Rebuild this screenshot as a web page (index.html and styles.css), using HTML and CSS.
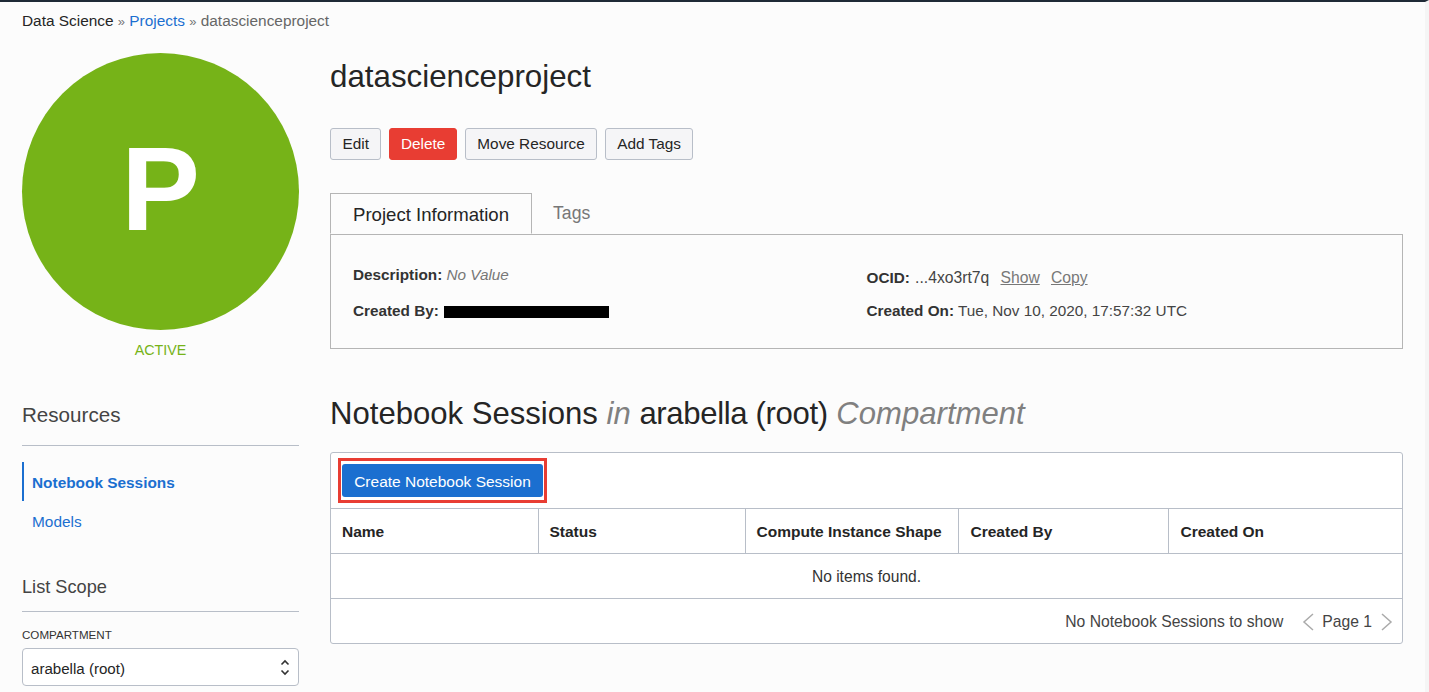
FILE: index.html
```html
<!DOCTYPE html>
<html lang="en">
<head>
    <meta charset="UTF-8">
    <meta name="viewport" content="width=device-width, initial-scale=1.0">
    <title>datascienceproject</title>
    <link rel="stylesheet" href="styles.css">
</head>
<body>
    <div class="page">
        <div class="breadcrumb">
            <span>Data Science</span> <span class="sep">»</span> <a href="#">Projects</a> <span class="sep">»</span> <span class="current">datascienceproject</span>
        </div>
        <div class="columns">
            <aside class="sidebar">
                <div class="avatar">P</div>
                <div class="status">ACTIVE</div>
                <h4 class="side-title resources-title">Resources</h4>
                <ul class="side-nav">
                    <li class="active"><a href="#">Notebook Sessions</a></li>
                    <li><a href="#">Models</a></li>
                </ul>
                <h4 class="side-title scope-title">List Scope</h4>
                <div class="field-label">COMPARTMENT</div>
                <div class="select">
                    <span>arabella (root)</span>
                    <svg width="10" height="17" viewBox="0 0 10 17" fill="none" stroke="#333" stroke-width="1.6">
                        <path d="M1.5 5.5 5 2l3.5 3.5"/>
                        <path d="M1.5 11.5 5 15l3.5-3.5"/>
                    </svg>
                </div>
            </aside>
            <main class="content">
                <h1>datascienceproject</h1>
                <div class="actions">
                    <button class="btn">Edit</button>
                    <button class="btn btn-danger">Delete</button>
                    <button class="btn">Move Resource</button>
                    <button class="btn">Add Tags</button>
                </div>
                <div class="tabs">
                    <div class="tab active">Project Information</div>
                    <div class="tab">Tags</div>
                </div>
                <div class="info">
                    <div class="info-col">
                        <div class="info-row desc"><b>Description:</b> <i>No Value</i></div>
                        <div class="info-row"><b>Created By:</b> <span class="redacted"></span></div>
                    </div>
                    <div class="info-col">
                        <div class="info-row ocid"><b>OCID:</b> <span class="ocid-val">...4xo3rt7q</span> <a href="#">Show</a> <a href="#">Copy</a></div>
                        <div class="info-row"><b>Created On:</b> Tue, Nov 10, 2020, 17:57:32 UTC</div>
                    </div>
                </div>
                <h2>Notebook Sessions <i>in</i> <span class="scope-name">arabella (root)</span> <i>Compartment</i></h2>
                <div class="panel">
                    <div class="toolbar">
                        <div class="highlight"><button class="btn-primary">Create Notebook Session</button></div>
                    </div>
                    <table>
                        <thead>
                            <tr>
                                <th class="col-name">Name</th>
                                <th class="col-status">Status</th>
                                <th class="col-shape">Compute Instance Shape</th>
                                <th class="col-by">Created By</th>
                                <th class="col-on">Created On</th>
                            </tr>
                        </thead>
                        <tbody>
                            <tr><td colspan="5">No items found.</td></tr>
                        </tbody>
                    </table>
                    <div class="pager">
                        <span class="pager-text">No Notebook Sessions to show</span>
                        <svg width="12" height="18" viewBox="0 0 12 18" fill="none" stroke="#aaa" stroke-width="1.5"><path d="M11 1 2 9l9 8"/></svg>
                        <span class="page-num">Page 1</span>
                        <svg width="12" height="18" viewBox="0 0 12 18" fill="none" stroke="#aaa" stroke-width="1.5"><path d="m1 1 9 8-9 8"/></svg>
                    </div>
                </div>
            </main>
        </div>
    </div>
</body>
</html>
```

FILE: styles.css
```css
html, body {
    height: 100%;
}

body {
    margin: 0;
    height: 692px;
    overflow: hidden;
    background: #fcfcfc;
    color: #252525;
    font-family: "Liberation Sans", Arial, sans-serif;
    font-size: 15.3px;
}

a {
    color: #1b6fd0;
    text-decoration: none;
}

.page {
    height: 692px;
    border-top: 2px solid #1f2a36;
    border-right: 4px solid #f5f5f5;
    padding: 0 22px;
    box-sizing: border-box;
    overflow: hidden;
}

.breadcrumb {
    padding-top: 10px;
    height: 41px;
    box-sizing: border-box;
    line-height: 18px;
    font-size: 15.4px;
}

.breadcrumb .sep {
    color: #777;
    font-size: 13px;
}

.breadcrumb .current {
    color: #666;
}

.columns {
    display: flex;
    gap: 31px;
}

.sidebar {
    width: 277px;
    flex: none;
    padding-top: 10px;
}

.avatar {
    width: 277px;
    height: 277px;
    border-radius: 50%;
    background: #76b318;
    color: #fff;
    font-size: 118px;
    font-weight: 700;
    text-align: center;
    line-height: 273px;
}

.status {
    margin-top: 11px;
    text-align: center;
    color: #76b318;
    font-size: 14.3px;
    line-height: 18px;
}

.side-title {
    margin: 0;
    font-weight: 400;
    font-size: 20.6px;
    line-height: 24px;
    color: #444;
    padding-bottom: 18px;
    border-bottom: 1px solid #b8bec8;
}

.resources-title {
    margin-top: 44px;
}

.scope-title {
    font-size: 18.2px;
    margin-top: 35px;
    padding-bottom: 12px;
}

.side-nav {
    list-style: none;
    margin: 16px 0 0;
    padding: 0;
}

.side-nav li {
    height: 39px;
    line-height: 41px;
    padding-left: 10px;
    font-size: 15.4px;
}

.side-nav li.active {
    border-left: 2px solid #1b6fd0;
    padding-left: 8px;
    font-weight: 700;
}

.field-label {
    margin-top: 16px;
    font-size: 11.6px;
    line-height: 14px;
    color: #333;
}

.select {
    margin-top: 6px;
    height: 38px;
    box-sizing: border-box;
    border: 1px solid #b8bec8;
    border-radius: 4px;
    background: #fff;
    display: flex;
    align-items: center;
    justify-content: space-between;
    padding: 0 8px;
    font-size: 15.1px;
}

.select span {
    padding-top: 2px;
}

.content {
    width: 1073px;
    flex: none;
}

h1 {
    margin: 0;
    font-weight: 400;
    font-size: 31.3px;
    line-height: 36px;
    padding-top: 16px;
}

.actions {
    display: flex;
    gap: 7.5px;
    margin-top: 33px;
}

.btn {
    height: 32px;
    padding: 0 11.5px;
    border: 1px solid #b8bec8;
    border-radius: 3px;
    background: #f5f5f7;
    color: #252525;
    font: 15.35px "Liberation Sans", Arial, sans-serif;
}

.btn-danger {
    padding: 0 11px;
    background: #e83d33;
    border-color: #e83d33;
    color: #fff;
}

.tabs {
    display: flex;
    margin-top: 33px;
    height: 41px;
}

.tab {
    padding: 0 21px;
    line-height: 40px;
    font-size: 17.6px;
    color: #777;
}

.tab.active {
    padding: 0 22px;
    font-size: 18.6px;
    line-height: 42px;
    color: #252525;
    border: 1px solid #b5b5b5;
    border-bottom: 1px solid #fcfcfc;
    position: relative;
    z-index: 1;
    background: #fcfcfc;
}

.info {
    border: 1px solid #b5b5b5;
    height: 115px;
    box-sizing: border-box;
    display: flex;
    padding: 30px 22px 0;
}

.info-col {
    width: 514px;
}

.info-row {
    line-height: 20px;
    margin-bottom: 16px;
    color: #444;
}

.info-row b {
    color: #333;
}

.info-row i {
    color: #777;
}

.info-row.ocid {
    padding-top: 3px;
    margin-bottom: 13px;
}

.info-row.ocid a {
    color: #777;
    font-size: 15.7px;
    text-decoration: underline;
    margin-left: 7px;
}

.ocid-val {
    margin-left: 1px;
    font-size: 15.7px;
}

.redacted {
    display: inline-block;
    width: 165px;
    height: 12px;
    margin-left: 1px;
    background: #000;
    vertical-align: -2px;
}

h2 {
    margin: 47px 0 0;
    font-weight: 400;
    font-size: 31.1px;
    line-height: 36px;
}

h2 i {
    color: #808080;
}

.scope-name {
    letter-spacing: -0.35px;
}

.panel {
    margin-top: 20px;
    border: 1px solid #b8bec8;
    border-radius: 3px;
    background: #fff;
}

.toolbar {
    height: 55px;
    box-sizing: border-box;
    padding: 5px 0 0 7px;
}

.highlight {
    display: inline-block;
    border: 3px solid #e83d33;
    padding: 3px 1px;
}

.btn-primary {
    display: block;
    height: 33px;
    width: 201px;
    padding: 2px 0 0;
    border: 0;
    border-radius: 3px;
    background: #1b6fd0;
    color: #fff;
    font: 15.5px "Liberation Sans", Arial, sans-serif;
}

table {
    width: 100%;
    border-collapse: collapse;
    table-layout: fixed;
}

th {
    height: 45px;
    padding: 2px 0 0 11px;
    text-align: left;
    font-size: 15.5px;
    box-sizing: border-box;
    border-top: 1px solid #b8bec8;
    border-bottom: 1px solid #b8bec8;
    border-left: 1px solid #b8bec8;
}

th:first-child {
    border-left: 0;
}

.col-name {
    width: 207px;
}

.col-status {
    width: 207px;
}

.col-shape {
    width: 213px;
}

.col-by {
    width: 210px;
    padding-left: 12px;
}

.col-on {
    padding-left: 12px;
}

td {
    height: 45px;
    padding-top: 2px;
    box-sizing: border-box;
    text-align: center;
    border-bottom: 1px solid #b8bec8;
    color: #333;
    font-size: 15.6px;
}

.pager {
    height: 44px;
    padding: 2px 9px 0 0;
    box-sizing: border-box;
    display: flex;
    align-items: center;
    justify-content: flex-end;
    color: #444;
    font-size: 15.7px;
}

.pager svg {
    margin-top: -1px;
}

.pager-text {
    margin-right: 19px;
}

.page-num {
    margin: 0 9px 0 8px;
}
```
